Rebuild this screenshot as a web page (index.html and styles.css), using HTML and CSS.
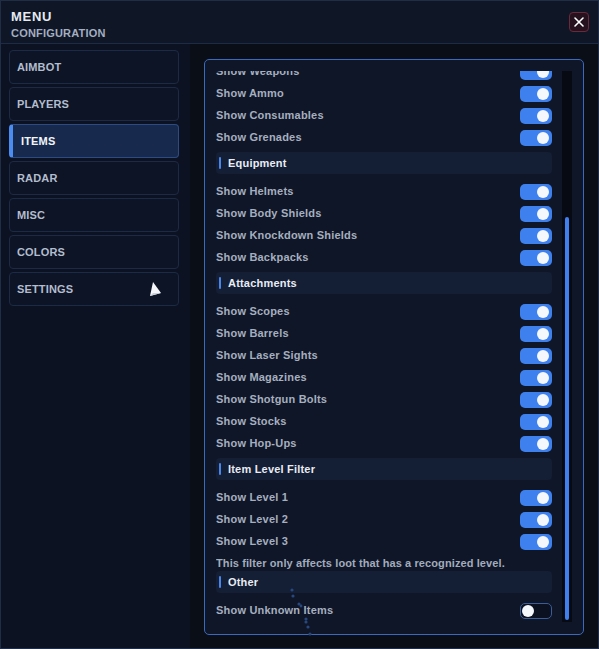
FILE: index.html
```html
<!DOCTYPE html>
<html>
<head>
<meta charset="utf-8">
<link rel="stylesheet" href="styles.css">
</head>
<body>
<div class="window">
  <header class="topbar">
    <div class="titles">
      <div class="title">MENU</div>
      <div class="subtitle">CONFIGURATION</div>
    </div>
    <button class="close" aria-label="Close">
      <svg width="12" height="12" viewBox="0 0 12 12"><path d="M2 2 L10 10 M10 2 L2 10" stroke="#ffffff" stroke-width="1.6" stroke-linecap="round" fill="none"/></svg>
    </button>
  </header>
  <div class="content">
    <nav class="sidebar">
      <div class="nav-item">AIMBOT</div>
      <div class="nav-item">PLAYERS</div>
      <div class="nav-item active">ITEMS</div>
      <div class="nav-item">RADAR</div>
      <div class="nav-item">MISC</div>
      <div class="nav-item">COLORS</div>
      <div class="nav-item">SETTINGS</div>
    </nav>
    <main class="main">
      <section class="panel">
        <div class="viewport">
          <div class="list">
            <div class="row"><span>Show Weapons</span><span class="toggle on"></span></div>
            <div class="row"><span>Show Ammo</span><span class="toggle on"></span></div>
            <div class="row"><span>Show Consumables</span><span class="toggle on"></span></div>
            <div class="row"><span>Show Grenades</span><span class="toggle on"></span></div>
            <div class="section">Equipment</div>
            <div class="row"><span>Show Helmets</span><span class="toggle on"></span></div>
            <div class="row"><span>Show Body Shields</span><span class="toggle on"></span></div>
            <div class="row"><span>Show Knockdown Shields</span><span class="toggle on"></span></div>
            <div class="row"><span>Show Backpacks</span><span class="toggle on"></span></div>
            <div class="section">Attachments</div>
            <div class="row"><span>Show Scopes</span><span class="toggle on"></span></div>
            <div class="row"><span>Show Barrels</span><span class="toggle on"></span></div>
            <div class="row"><span>Show Laser Sights</span><span class="toggle on"></span></div>
            <div class="row"><span>Show Magazines</span><span class="toggle on"></span></div>
            <div class="row"><span>Show Shotgun Bolts</span><span class="toggle on"></span></div>
            <div class="row"><span>Show Stocks</span><span class="toggle on"></span></div>
            <div class="row"><span>Show Hop-Ups</span><span class="toggle on"></span></div>
            <div class="section">Item Level Filter</div>
            <div class="row"><span>Show Level 1</span><span class="toggle on"></span></div>
            <div class="row"><span>Show Level 2</span><span class="toggle on"></span></div>
            <div class="row"><span>Show Level 3</span><span class="toggle on"></span></div>
            <div class="note">This filter only affects loot that has a recognized level.</div>
            <div class="section">Other</div>
            <div class="row"><span>Show Unknown Items</span><span class="toggle off"></span></div>
          </div>
        </div>
        <div class="scrollbar"><div class="thumb"></div></div>
      </section>
    </main>
  </div>
</div>
<svg class="cursor" width="16" height="18" viewBox="0 0 16 18"><polygon points="5,1 13,12 2,15" fill="#f4f6fa"/><polygon points="2,15 5,12 13,12" fill="#c9ced8"/></svg>
<svg class="trail" width="24" height="50" viewBox="0 0 24 50">
  <g fill="#27477e">
    <circle cx="4" cy="2" r="1.6"/>
    <circle cx="5" cy="8" r="1.6"/>
    <circle cx="11" cy="16" r="1.6"/>
    <circle cx="13" cy="18" r="1.4"/>
    <circle cx="18" cy="31" r="1.6"/>
    <circle cx="18" cy="34" r="1.6"/>
    <circle cx="20" cy="39" r="1.6"/>
    <circle cx="22" cy="46" r="1.6"/>
  </g>
</svg>
</body>
</html>
```
FILE: styles.css
```css
* { box-sizing: border-box; }
html, body {
  margin: 0;
  padding: 0;
  background: #0a0e17;
}
body {
  width: 599px;
  height: 649px;
  position: relative;
  overflow: hidden;
  font-family: "Liberation Sans", Arial, sans-serif;
  font-weight: bold;
}
.window {
  width: 599px;
  height: 649px;
  border: 1px solid #1f2d47;
  display: flex;
  flex-direction: column;
  background: #0a0e17;
}
.topbar {
  height: 43px;
  flex: none;
  background: #0f1626;
  border-bottom: 1px solid #1c2b47;
  display: flex;
  align-items: flex-start;
  justify-content: space-between;
  padding: 0 9px 0 10px;
}
.titles {
  display: flex;
  flex-direction: column;
}
.title {
  font-size: 13px;
  letter-spacing: 0.7px;
  color: #e6eaf1;
  line-height: 15px;
  margin-top: 8px;
}
.subtitle {
  font-size: 11px;
  letter-spacing: 0.2px;
  color: #a3aec1;
  line-height: 13px;
  margin-top: 3px;
}
.close {
  margin-top: 11px;
  width: 20px;
  height: 20px;
  padding: 0;
  border: 1px solid #6b2a3c;
  border-radius: 4px;
  background: #26111f;
  display: flex;
  align-items: center;
  justify-content: center;
}
.content {
  flex: 1;
  display: flex;
  min-height: 0;
}
.sidebar {
  width: 189px;
  flex: none;
  background: #0c1221;
  padding: 6px 11px 0 8px;
  display: flex;
  flex-direction: column;
  gap: 3px;
}
.nav-item {
  height: 34px;
  border: 1px solid #1b2a46;
  border-radius: 4px;
  background: #0d1425;
  color: #b3bdce;
  font-size: 11px;
  letter-spacing: 0.15px;
  display: flex;
  align-items: center;
  padding-left: 7px;
}
.nav-item.active {
  background: #172a4d;
  border-color: #2d4b80;
  color: #f2f5fa;
  padding-left: 8px;
  border-left: 4px solid #4a8cf2;
}
.main {
  flex: 1;
  display: flex;
  background: #0a0e17;
  padding: 15px 14px 13px 14px;
}
.panel {
  flex: 1;
  border: 1px solid #3a69bd;
  border-radius: 5px;
  background: #0f1628;
  padding: 11px 11px 12px 11px;
  display: flex;
  gap: 10px;
}
.viewport {
  width: 336px;
  height: 551px;
  overflow: hidden;
}
.list {
  margin-top: -11px;
  display: flex;
  flex-direction: column;
}
.row {
  height: 22px;
  display: flex;
  align-items: center;
  justify-content: space-between;
  color: #a6afbf;
  font-size: 11px;
  letter-spacing: 0.2px;
}
.toggle {
  width: 32px;
  height: 16px;
  border-radius: 5px;
  position: relative;
  flex: none;
  margin-top: 1px;
}
.toggle::after {
  content: "";
  position: absolute;
  top: 2px;
  width: 12px;
  height: 12px;
  border-radius: 50%;
  background: #f4f7fc;
}
.toggle.on {
  background: #3f80ef;
}
.toggle.on::after {
  right: 3px;
}
.toggle.off {
  background: #0b1120;
  border: 1px solid #3a5d99;
}
.toggle.off::after {
  top: 1px;
  left: 1px;
}
.section {
  height: 22px;
  margin: 4px 0 6px 0;
  background: #141e35;
  border-radius: 4px;
  display: flex;
  align-items: center;
  color: #e8ecf3;
  font-size: 11px;
  letter-spacing: 0.2px;
  padding-left: 12px;
  position: relative;
}
.section::before {
  content: "";
  position: absolute;
  left: 3px;
  top: 5px;
  width: 2px;
  height: 12px;
  background: #4a86ea;
  border-radius: 1px;
}
.note {
  height: 19px;
  padding-top: 5px;
  line-height: 13px;
  color: #a2acbc;
  font-size: 11px;
  letter-spacing: 0.1px;
}
.note + .section {
  margin-top: 0;
}
.scrollbar {
  width: 10px;
  height: 551px;
  background: #070a12;
  position: relative;
  display: flex;
  justify-content: center;
  padding-top: 146px;
  padding-bottom: 2px;
}
.thumb {
  width: 4px;
  height: 100%;
  background: #3f7ff0;
  border-radius: 2px;
}
.cursor {
  position: absolute;
  left: 148px;
  top: 281px;
}
.trail {
  position: absolute;
  left: 288px;
  top: 588px;
}
```
